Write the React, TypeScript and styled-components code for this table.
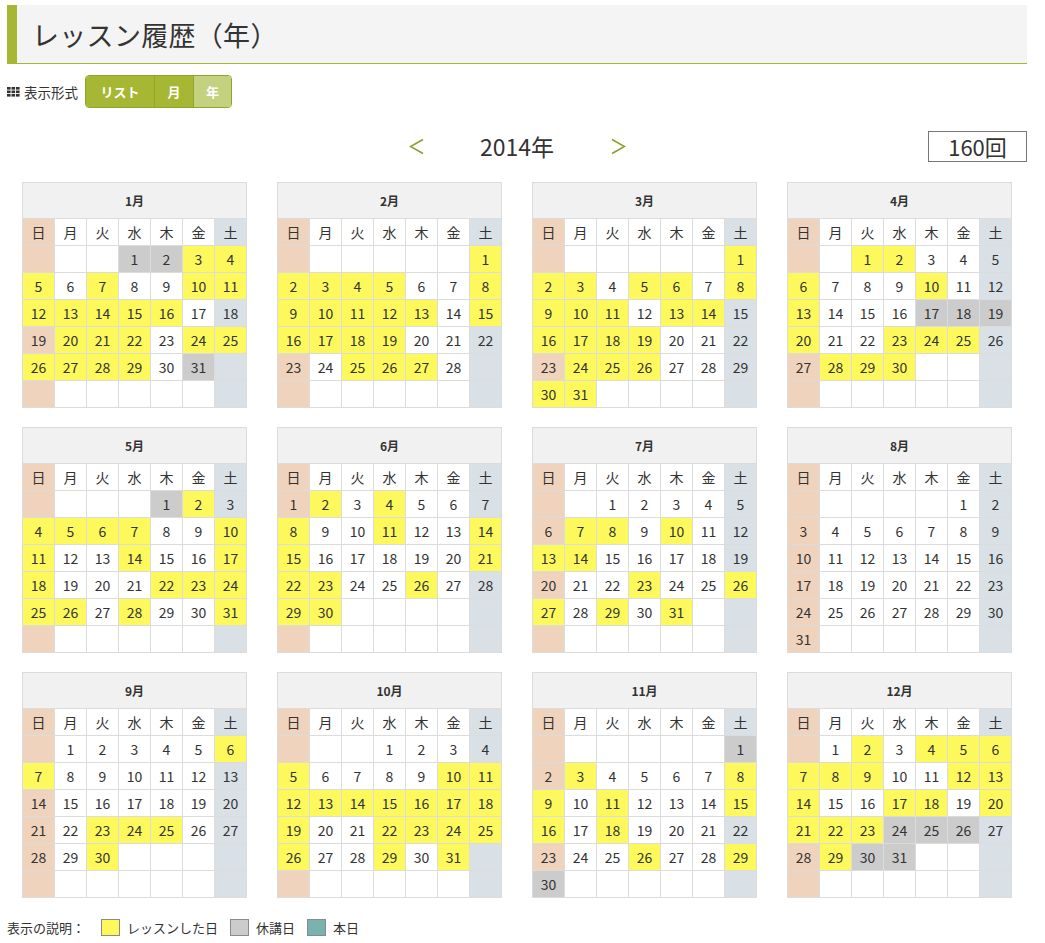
import React from 'react';
import styled, { createGlobalStyle } from 'styled-components';

const GlobalStyle = createGlobalStyle`
  html, body { margin: 0; padding: 0; background: #ffffff; }
  body {
    font-family: "Noto Sans CJK JP", "Noto Sans", sans-serif;
    color: #333333;
  }
`;

const GREEN = '#a5b733';
const GREEN_DARK = '#92a42b';

type CellKind = 'lesson' | 'off' | 'sun' | 'sat' | 'plain' | 'today';

const CELL_BG: Record<CellKind, string> = {
  lesson: '#fdf95c',
  off: '#cccccc',
  sun: '#f0d3bd',
  sat: '#d9e1e6',
  plain: '#ffffff',
  today: '#7ab3ad',
};

interface MonthData {
  lessons: number[];
  off: number[];
}

const YEAR = 2014;

const MONTHS: MonthData[] = [
  { lessons: [3, 4, 5, 7, 10, 11, 12, 13, 14, 15, 16, 20, 21, 22, 24, 25, 26, 27, 28, 29], off: [1, 2, 31] },
  { lessons: [1, 2, 3, 4, 5, 8, 9, 10, 11, 12, 13, 15, 16, 17, 18, 19, 25, 26, 27], off: [] },
  { lessons: [1, 2, 3, 5, 6, 8, 9, 10, 11, 13, 14, 16, 17, 18, 19, 24, 25, 26, 30, 31], off: [] },
  { lessons: [1, 2, 6, 10, 13, 20, 23, 24, 25, 28, 29, 30], off: [17, 18, 19] },
  { lessons: [2, 4, 5, 6, 7, 10, 11, 14, 17, 18, 22, 23, 24, 25, 26, 28, 31], off: [1] },
  { lessons: [2, 4, 8, 11, 14, 15, 21, 22, 23, 26, 29, 30], off: [] },
  { lessons: [7, 8, 10, 13, 14, 23, 26, 27, 29, 31], off: [] },
  { lessons: [], off: [] },
  { lessons: [6, 7, 23, 24, 25, 30], off: [] },
  { lessons: [5, 10, 11, 12, 13, 14, 15, 16, 17, 18, 19, 22, 23, 24, 25, 26, 29, 31], off: [] },
  { lessons: [3, 8, 9, 11, 15, 16, 18, 26, 29], off: [1, 30] },
  { lessons: [2, 4, 5, 6, 7, 8, 9, 12, 13, 14, 17, 18, 20, 21, 22, 23, 29], off: [24, 25, 26, 30, 31] },
];

const WEEKDAYS = ['日', '月', '火', '水', '木', '金', '土'];

const Page = styled.div`
  padding: 5px 18px 0 7px;
  width: 1020px;
`;

const TitleBar = styled.h1`
  margin: 0;
  height: 58px;
  display: flex;
  align-items: center;
  padding-left: 15px;
  background: #f4f4f4;
  border-left: 10px solid ${GREEN};
  border-bottom: 1px solid ${GREEN};
  font-size: 27px;
  font-weight: 400;
  color: #333333;
  letter-spacing: 0.3px;
`;

const Toolbar = styled.div`
  margin-top: 11px;
  height: 33px;
  display: flex;
  align-items: center;
`;

const ToolbarLabel = styled.span`
  display: flex;
  align-items: center;
  gap: 4px;
  font-size: 13.5px;
  color: #333333;
  margin-right: 7px;
`;

const ButtonGroup = styled.div`
  display: flex;
  height: 33px;
  box-sizing: border-box;
  border: 1px solid ${GREEN_DARK};
  border-radius: 4px;
  overflow: hidden;
`;

const ViewButton = styled.button<{ $active?: boolean; $w: number }>`
  width: ${(p) => p.$w}px;
  height: 100%;
  border: none;
  border-left: 1px solid ${GREEN_DARK};
  &:first-child { border-left: none; }
  background: ${(p) => (p.$active ? '#c4d27f' : GREEN)};
  color: #ffffff;
  font-family: inherit;
  font-size: 13px;
  font-weight: 700;
  padding: 0;
  cursor: pointer;
`;

const YearRow = styled.div`
  margin-top: 21px;
  height: 31px;
  display: grid;
  grid-template-columns: 1fr auto 1fr;
  align-items: center;
`;

const YearNav = styled.div`
  grid-column: 2;
  display: flex;
  align-items: center;
`;

const Chevron = styled.button`
  background: none;
  border: none;
  padding: 0;
  width: 16px;
  height: 18px;
  display: flex;
  align-items: center;
  justify-content: center;
  cursor: pointer;
`;

const YearText = styled.span`
  width: 186px;
  text-align: center;
  font-size: 23px;
  color: #333333;
`;

const CountBox = styled.div`
  grid-column: 3;
  justify-self: end;
  width: 99px;
  height: 31px;
  box-sizing: border-box;
  border: 1px solid #777777;
  display: flex;
  align-items: center;
  justify-content: center;
  font-size: 22px;
  color: #333333;
`;

const CalendarGrid = styled.div`
  margin-top: 22px;
  padding: 0 15px;
  display: grid;
  grid-template-columns: repeat(4, 225px);
  column-gap: 30px;
  row-gap: 19px;
`;

const MonthCard = styled.div`
  display: grid;
  grid-template-columns: repeat(7, 31px);
  grid-template-rows: 35px repeat(7, 26px);
  gap: 1px;
  padding: 1px;
  background: #dcdcdc;
  width: 225px;
  box-sizing: border-box;
`;

const MonthHeader = styled.div`
  grid-column: 1 / -1;
  background: #f1f1f1;
  display: flex;
  align-items: center;
  justify-content: center;
  font-size: 12px;
  font-weight: 700;
  color: #333333;
`;

const Cell = styled.div<{ $kind: CellKind }>`
  background: ${(p) => CELL_BG[p.$kind]};
  display: flex;
  align-items: center;
  justify-content: center;
  font-size: 14px;
  color: #333333;
`;

const Legend = styled.div`
  margin-top: 21px;
  display: flex;
  align-items: center;
  font-size: 13px;
  color: #333333;
  height: 17px;
`;

const LegendLabel = styled.span`
  margin-right: 16px;
`;

const Swatch = styled.span<{ $kind: CellKind }>`
  width: 17px;
  height: 15px;
  border: 1px solid #8a8a8a;
  background: ${(p) => CELL_BG[p.$kind]};
  margin-right: 7px;
`;

const LegendText = styled.span`
  margin-right: 12px;
`;

const GridIcon = () => (
  <svg width="13" height="10" viewBox="0 0 13 10">
    {[0, 1, 2].map((r) =>
      [0, 1, 2].map((c) => (
        <rect key={`${r}-${c}`} x={c * 4.5} y={r * 3.5} width="3.6" height="2.6" fill="#333" />
      ))
    )}
  </svg>
);

const ChevronIcon = ({ dir }: { dir: 'left' | 'right' }) => (
  <svg width="15" height="17" viewBox="0 0 15 17">
    <polyline
      points={dir === 'left' ? '14,1.5 1.5,8.5 14,15.5' : '1,1.5 13.5,8.5 1,15.5'}
      fill="none"
      stroke="#86a32c"
      strokeWidth="1.6"
    />
  </svg>
);

function Month({ index, data }: { index: number; data: MonthData }) {
  const first = new Date(YEAR, index, 1).getDay();
  const days = new Date(YEAR, index + 1, 0).getDate();
  const cells: { day: number | null; kind: CellKind }[] = [];
  for (let i = 0; i < 42; i++) {
    const day = i - first + 1;
    const valid = day >= 1 && day <= days;
    const col = i % 7;
    let kind: CellKind = col === 0 ? 'sun' : col === 6 ? 'sat' : 'plain';
    if (valid && data.lessons.includes(day)) kind = 'lesson';
    else if (valid && data.off.includes(day)) kind = 'off';
    cells.push({ day: valid ? day : null, kind });
  }
  return (
    <MonthCard>
      <MonthHeader>{index + 1}月</MonthHeader>
      {WEEKDAYS.map((w, i) => (
        <Cell key={w} $kind={i === 0 ? 'sun' : i === 6 ? 'sat' : 'plain'}>
          {w}
        </Cell>
      ))}
      {cells.map((c, i) => (
        <Cell key={i} $kind={c.kind}>
          {c.day ?? ''}
        </Cell>
      ))}
    </MonthCard>
  );
}

export default function App() {
  return (
    <>
      <GlobalStyle />
      <Page>
        <TitleBar>レッスン履歴（年）</TitleBar>
        <Toolbar>
          <ToolbarLabel>
            <GridIcon />
            表示形式
          </ToolbarLabel>
          <ButtonGroup>
            <ViewButton $w={68}>リスト</ViewButton>
            <ViewButton $w={39}>月</ViewButton>
            <ViewButton $w={38} $active>
              年
            </ViewButton>
          </ButtonGroup>
        </Toolbar>
        <YearRow>
          <YearNav>
            <Chevron aria-label="前年">
              <ChevronIcon dir="left" />
            </Chevron>
            <YearText>2014年</YearText>
            <Chevron aria-label="翌年">
              <ChevronIcon dir="right" />
            </Chevron>
          </YearNav>
          <CountBox>160回</CountBox>
        </YearRow>
        <CalendarGrid>
          {MONTHS.map((m, i) => (
            <Month key={i} index={i} data={m} />
          ))}
        </CalendarGrid>
        <Legend>
          <LegendLabel>表示の説明：</LegendLabel>
          <Swatch $kind="lesson" />
          <LegendText>レッスンした日</LegendText>
          <Swatch $kind="off" />
          <LegendText>休講日</LegendText>
          <Swatch $kind="today" />
          <LegendText>本日</LegendText>
        </Legend>
      </Page>
    </>
  );
}
